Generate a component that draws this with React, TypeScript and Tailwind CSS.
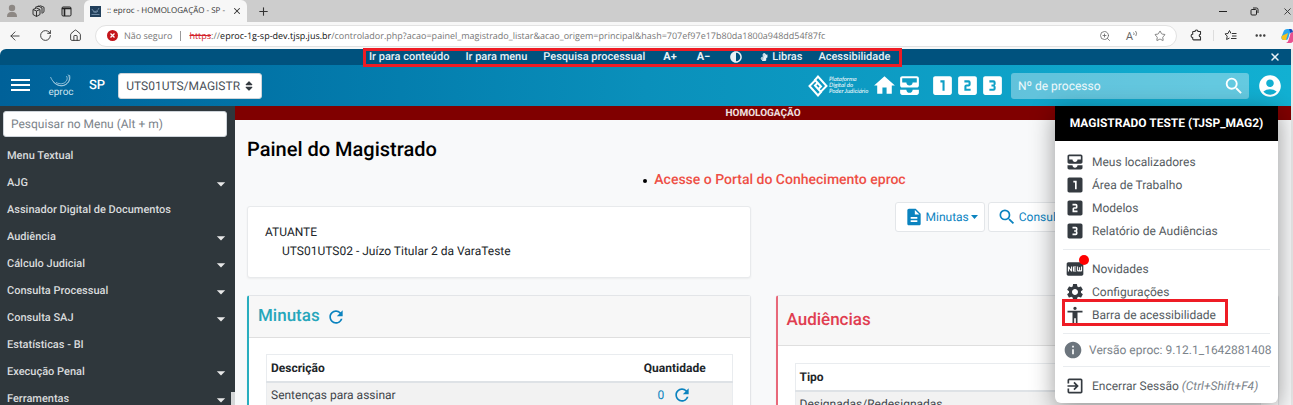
import React from "react";
import {
  MdAccessibility,
  MdAccountCircle,
  MdAllInbox,
  MdArrowDropDown,
  MdDescription,
  MdExitToApp,
  MdFiberNew,
  MdHome,
  MdInfo,
  MdLooks3,
  MdLooksOne,
  MdLooksTwo,
  MdRefresh,
  MdSearch,
  MdSettings,
} from "react-icons/md";
import { FaAdjust, FaSignLanguage, FaSort } from "react-icons/fa";
import { ArrowLeft, Ellipsis, House, Plus, RotateCw, Star, X, ZoomIn } from "lucide-react";

const menuItems: { label: string; expandable: boolean }[] = [
  { label: "Menu Textual", expandable: false },
  { label: "AJG", expandable: true },
  { label: "Assinador Digital de Documentos", expandable: false },
  { label: "Audiência", expandable: true },
  { label: "Cálculo Judicial", expandable: true },
  { label: "Consulta Processual", expandable: true },
  { label: "Consulta SAJ", expandable: true },
  { label: "Estatísticas - BI", expandable: false },
  { label: "Execução Penal", expandable: true },
  { label: "Ferramentas", expandable: true },
];

function TabStrip() {
  return (
    <div className="flex h-[22px] shrink-0 items-center bg-[#cdcdcd] text-[#333]">
      <button type="button" aria-label="Perfil" className="ml-1.5 shrink-0">
        <svg width="12" height="14" viewBox="0 0 12 14" className="fill-[#8d8884]">
          <circle cx="6" cy="4" r="3.2" />
          <path d="M1 13c0-3 1-5 5-5s5 2 5 5z" />
        </svg>
      </button>
      <button type="button" aria-label="Espaços de trabalho" className="ml-3.5 shrink-0">
        <svg width="13" height="13" viewBox="0 0 13 13" fill="none" stroke="#333" strokeWidth="1">
          <path d="M1 4.5 4.5 3 8 4.5v5L4.5 11.5 1 9.5z" />
          <path d="M1 4.5 4.5 6 8 4.5M4.5 6v5.5" />
          <path d="M3 2.5 6.5 1 10 3v5.5M5.5 1.8 8.5.8 12 2.3v4.5L10.5 8" />
        </svg>
      </button>
      <button type="button" aria-label="Ações de guia" className="ml-4 shrink-0">
        <svg width="11" height="11" viewBox="0 0 11 11" fill="none" stroke="#222">
          <rect x="1" y="1" width="9" height="9" rx="1.2" />
          <path d="M1 2.5h9M3.5 3v7" strokeWidth="1.6" />
        </svg>
      </button>
      <div className="ml-3 flex h-full w-[163px] items-center self-start rounded-t-md bg-[#f7f7f7] pl-1.5">
        <svg width="11" height="11" viewBox="0 0 11 11" className="shrink-0">
          <rect width="11" height="11" fill="#22405c" />
          <path d="M2 3c1 3 5 4 7-1M3 5.5c2 1.5 4 1 5-.5M1.5 8.5h8" stroke="#7f9bb5" strokeWidth=".8" fill="none" />
        </svg>
        <span className="ml-1.5 w-[125px] shrink-0 text-[8px] whitespace-nowrap">:: eproc - HOMOLOGAÇÃO - SP -</span>
        <button type="button" aria-label="Fechar guia">
          <X size={10} strokeWidth={2.5} />
        </button>
      </div>
      <button type="button" aria-label="Nova guia" className="ml-2.5">
        <Plus size={13} strokeWidth={2} />
      </button>
      <div className="ml-auto flex items-center gap-[23px]">
        <button type="button" aria-label="Minimizar">
          <svg width="8" height="8" viewBox="0 0 8 8" stroke="#222"><path d="M0 4.5h8" /></svg>
        </button>
        <button type="button" aria-label="Restaurar">
          <svg width="9" height="9" viewBox="0 0 9 9" fill="none" stroke="#222">
            <rect x="1" y="2.5" width="5.5" height="5.5" rx="1" />
            <path d="M3 1h3.5q1.5 0 1.5 1.5V6" />
          </svg>
        </button>
        <button type="button" aria-label="Fechar">
          <X size={11} strokeWidth={2} />
        </button>
      </div>
    </div>
  );
}

function AddressBar() {
  return (
    <div className="flex h-[27px] shrink-0 items-center overflow-hidden bg-[#f7f7f7] text-[#333]">
      <div className="flex w-[95px] shrink-0 items-center gap-[17px] pl-2">
        <button type="button" aria-label="Voltar"><ArrowLeft size={14} strokeWidth={1.5} /></button>
        <button type="button" aria-label="Atualizar"><RotateCw size={13} strokeWidth={1.7} /></button>
        <button type="button" aria-label="Início"><House size={13} strokeWidth={1.7} /></button>
      </div>
      <div className="flex h-[22px] min-w-0 flex-1 items-center rounded-full border border-[#e2e2e2] bg-white pr-2.5 pl-[11px] text-[9px]">
        <svg width="11" height="11" viewBox="0 0 11 11" className="shrink-0">
          <circle cx="5.5" cy="5.5" r="5.5" fill="#c4161c" />
          <path d="M3.5 3.5l4 4M7.5 3.5l-4 4" stroke="#fff" strokeWidth="1.3" />
        </svg>
        <span className="ml-1.5 shrink-0 text-[9px] text-[#777]">Não seguro</span>
        <span className="mx-2 h-2.5 w-px shrink-0 bg-[#999]" />
        <span className="min-w-0 flex-1 overflow-hidden whitespace-nowrap text-[#777]">
          <span className="text-[#d3222a] line-through">https</span>://<span className="text-[#111]">eproc-1g-sp-dev.tjsp.jus.br</span>
          /controlador.php?acao=painel_magistrado_listar&amp;acao_origem=principal&amp;hash=707ef97e17b80da1800a948dd54f87fc
        </span>
        <div className="flex shrink-0 items-center gap-[15px] text-[#666]">
          <button type="button" aria-label="Zoom"><ZoomIn size={12} strokeWidth={1.6} /></button>
          <button type="button" aria-label="Ler em voz alta" className="flex h-3 items-center">
            <span className="text-[11px] leading-3">A</span>
            <svg width="6" height="12" viewBox="0 0 6 12" fill="none" stroke="#666" strokeWidth=".8"><path d="M.5 2.5q1.2 1 .2 2.5M2.5 1q2 2 .3 5" /></svg>
          </button>
          <button type="button" aria-label="Adicionar aos favoritos"><Star size={12} strokeWidth={1.6} /></button>
        </div>
      </div>
      <div className="flex shrink-0 items-center pl-[13px]">
        <button type="button" aria-label="Extensões">
          <svg width="13" height="13" viewBox="0 0 13 13" fill="none" stroke="#333" strokeWidth="1.1" strokeLinejoin="round">
            <path d="M3 2.5h2a1.5 1.5 0 0 1 3 0h2.5v2.8a1.3 1.3 0 0 0 0 2.6v3H3.5l-.8-.8V8.5a1.6 1.6 0 0 1 0-3.2V3z" />
          </svg>
        </button>
        <span className="mx-2.5 h-[11px] w-px bg-[#ddd]" />
        <button type="button" aria-label="Favoritos">
          <svg width="13" height="13" viewBox="0 0 13 13" fill="none" stroke="#333">
            <path d="M7 4.5 5.5 1.5 4 4.5l-3 .4 2.2 2.2-.6 3.4L5.5 9M8 4.5h4.5M8 7h4.5M7 9.5h5.5" />
          </svg>
        </button>
        <button type="button" aria-label="Mais opções" className="ml-[17px]"><Ellipsis size={13} strokeWidth={2.5} /></button>
        <button type="button" aria-label="Copilot" className="ml-3.5 w-3 overflow-hidden">
          <svg width="15" height="14" viewBox="0 0 15 14">
            <path d="M3 1.5Q4 0 6 0h4L7.5 8.5Q7 11 5 11H3Q0 11 .4 8z" fill="#2aa7ee" />
            <path d="M.6 7Q0 11 3 11h2l2-7z" fill="#f8c21c" />
            <path d="M12 12.5Q11 14 9 14H5q2-.5 2.6-3L9.5 4.5Q10 3 12 3q3 0 2.6 3z" fill="#e9508f" />
            <path d="M8 0h2q1.5 0 2 3-2 0-2.5 1.5z" fill="#1747b8" />
          </svg>
        </button>
      </div>
    </div>
  );
}

function AccessibilityBar() {
  return (
    <div className="flex h-4 shrink-0 items-center rounded-tl-md bg-[#00527e] text-[11px] leading-4 font-medium text-[#e8f1f6]">
      <nav aria-label="Acessibilidade" className="relative ml-[369px] flex items-center gap-4 whitespace-nowrap">
        <a href="#conteudo">Ir para conteúdo</a>
        <a href="#menu">Ir para menu</a>
        <a href="#pesquisa">Pesquisa processual</a>
        <button type="button" className="ml-0.5 font-bold">A+</button>
        <button type="button" className="ml-1 font-bold">A−</button>
        <button type="button" aria-label="Alto contraste" className="ml-1"><FaAdjust size={12} /></button>
        <a href="#libras" className="ml-0.5 flex items-center gap-1"><FaSignLanguage size={8} />Libras</a>
        <a href="#acessibilidade">Acessibilidade</a>
        <span className="pointer-events-none absolute -top-px -right-3 -bottom-0.5 -left-1.5 z-10 border-[3px] border-[#ee1c25]" />
      </nav>
      <button type="button" aria-label="Fechar barra" className="mr-2.5 ml-auto">
        <X size={12} strokeWidth={3} />
      </button>
    </div>
  );
}

function Header() {
  return (
    <header className="flex h-[41px] shrink-0 items-center bg-linear-to-r from-[#006199] via-[#0a90bb] to-[#12b0d2] text-white">
      <button type="button" aria-label="Menu" className="ml-[11px] shrink-0">
        <svg width="19" height="15" viewBox="0 0 19 15" stroke="#fff" strokeWidth="2"><path d="M0 2h19M0 7h19M0 12h19" /></svg>
      </button>
      <a href="#inicio" className="ml-[19px] flex w-6 shrink-0 flex-col items-center text-[10px] leading-[9px]">
        <svg width="24" height="14" viewBox="0 0 24 14" fill="none" stroke="#a9cfe3" strokeWidth=".8">
          <path d="M1.5 3C4 9 9 12.5 14 11.5 19 10.5 22 6 20.5 1" />
          <path d="M4 7.5c4 4.5 10 6 14 2 3-3 3-6 1-9" />
          <path d="M7 8.5c4 2 8 1.5 10-1 1.5-2 1.5-3.5.5-5.5" />
        </svg>
        <span className="text-[#cfe4ef]">eproc</span>
      </a>
      <span className="ml-4 text-[13px] font-medium">SP</span>
      <div className="relative ml-[13px] shrink-0">
        <select aria-label="Perfil" className="h-[26px] w-36 appearance-none rounded-[3px] border border-[#ced4da] bg-white pr-5 pl-[7px] text-[12px] text-[#495057] [text-rendering:geometricPrecision]">
          <option>UTS01UTS/MAGISTR</option>
        </select>
        <FaSort size={12} className="pointer-events-none absolute top-[7px] right-[7px] text-[#343a40]" />
      </div>
      <div className="ml-auto flex shrink-0 items-center">
        <a href="#pdpj" className="flex items-center gap-px">
          <svg width="20" height="22" viewBox="0 0 20 22" fill="none" stroke="#fff" strokeWidth="2">
            <path d="M7.5 5 1.5 11l8.5 9.5 3-3.5-6-6.5 3-3" />
            <path d="M12.5 17l6-6L10 1.5 7 5l6 6.5-3 3" />
          </svg>
          <span className="w-[41px] font-['Lato'] text-[6px] leading-[6px] whitespace-nowrap italic">
            Plataforma<br />Digital do<br />Poder Judiciário
          </span>
        </a>
        <a href="#home" aria-label="Início" className="ml-0.5"><MdHome size={25} /></a>
        <a href="#localizadores" aria-label="Meus localizadores"><MdAllInbox size={25} /></a>
        <a href="#area" aria-label="Área de Trabalho" className="ml-2"><MdLooksOne size={25} /></a>
        <a href="#modelos" aria-label="Modelos"><MdLooksTwo size={25} /></a>
        <a href="#relatorio" aria-label="Relatório de Audiências"><MdLooks3 size={25} /></a>
        <div className="ml-1.5 flex h-[26px] w-[238px] items-center rounded-[3px] bg-white/35 pr-1 pl-[7px]">
          <input type="text" aria-label="Nº de processo" placeholder="Nº de processo" className="min-w-0 flex-1 bg-transparent text-[12px] text-white outline-none [text-rendering:geometricPrecision] placeholder:text-white/90" />
          <button type="button" aria-label="Pesquisar"><MdSearch size={22} /></button>
        </div>
        <button type="button" aria-label="Conta" className="mr-2 ml-2"><MdAccountCircle size={26} /></button>
      </div>
    </header>
  );
}

function Sidebar() {
  return (
    <aside id="menu" className="relative w-[235px] shrink-0 overflow-hidden bg-[#2f373c]">
      <div className="px-[3px] pt-[5px] pb-1">
        <input type="text" aria-label="Pesquisar no Menu" placeholder="Pesquisar no Menu (Alt + m)" className="h-[26px] w-[224px] rounded-[3px] border border-[#ced4da] bg-white px-[7px] text-[12px] outline-none [text-rendering:geometricPrecision] placeholder:text-[#7b838a]" />
      </div>
      <ul className="pt-0.5">
        {menuItems.map((item) => (
          <li key={item.label}>
            <a href="#menu" className="flex h-[27px] items-center justify-between pr-1 pl-[7px] text-[11px] font-medium text-[#d9dbdc]">
              {item.label}
              {item.expandable && <MdArrowDropDown size={20} className="text-[#e8e8e8]" />}
            </a>
          </li>
        ))}
      </ul>
      <span className="absolute right-0 bottom-0 h-[13px] w-1 bg-[#d5d7d8]" />
    </aside>
  );
}

function ToolButton({ icon, label, caret }: { icon: React.ReactNode; label: string; caret?: boolean }) {
  return (
    <button type="button" className="flex h-[30px] shrink-0 items-center gap-0.5 rounded-[3px] border border-[#e3e6e9] bg-white pr-1.5 pl-2 text-[12px] whitespace-nowrap text-[#0b83bf] [text-rendering:geometricPrecision]">
      {icon}
      <span>{label}</span>
      {caret && <svg width="7" height="4" viewBox="0 0 7 4"><path d="M0 0h7L3.5 4z" fill="#0b83bf" /></svg>}
    </button>
  );
}

function DataTable({ columns, children }: { columns: string[]; children: React.ReactNode }) {
  return (
    <table className="w-full border border-[#e9ecef] text-[12px] text-[#3e444a]">
      <thead>
        <tr className="h-[27px] border-b-2 border-[#dee2e6] bg-white text-[#212529]">
          {columns.map((c, i) => (
            <th key={c} scope="col" className={i === 0 ? "px-1 text-left font-bold" : "w-[114px] text-center font-bold"}>{c}</th>
          ))}
        </tr>
      </thead>
      <tbody>{children}</tbody>
    </table>
  );
}

function Main() {
  return (
    <main id="conteudo" className="min-w-0 flex-1 overflow-hidden bg-[#f8f9fa]">
      <div className="h-3.5 bg-[#800000] text-center text-[10px] leading-[15px] font-bold text-[#f0e0e0]">HOMOLOGAÇÃO</div>
      <div className="px-3">
        <h1 className="pt-4 text-[20px] leading-[26px] font-medium text-black">Painel do Magistrado</h1>
        <ul className="flex justify-center pt-2 pl-[34px] text-[14px] leading-5">
          <li className="relative font-medium text-[#ee4f45]">
            <span className="absolute top-[9px] -left-[11px] size-1 rounded-full bg-black" />
            <a href="#portal">Acesse o Portal do Conhecimento eproc</a>
          </li>
        </ul>
        <div className="grid grid-cols-2 gap-x-[25px] gap-y-[17px] pt-3">
          <section className="mt-1 h-[72px] rounded-[3px] border border-[#e8eaec] bg-white px-[17px] pt-4 text-[12px] leading-[19px] text-[#212529] shadow-xs">
            <p>ATUANTE</p>
            <p className="pl-[17px]">UTS01UTS02 - Juízo Titular 2 da VaraTeste</p>
          </section>
          <div className="flex items-start gap-[3px] overflow-hidden pl-[119px]">
            <ToolButton icon={<MdDescription size={20} />} label="Minutas" caret />
            <ToolButton icon={<MdSearch size={20} />} label="Consultas" caret />
          </div>
          <section className="rounded-[3px] border border-l-2 border-[#e3e5e8] border-l-[#28aebf] bg-white shadow-xs">
            <h2 className="flex h-[42px] items-center gap-1.5 border-b border-[#dfdfdf] bg-[#f7f7f7] px-[9px] text-[17px] font-medium text-[#26a6bb]">
              Minutas
              <button type="button" aria-label="Atualizar minutas" className="text-[#0b83bf]"><MdRefresh size={20} /></button>
            </h2>
            <div className="px-[17px] pt-4 pb-4">
              <DataTable columns={["Descrição", "Quantidade"]}>
                <tr className="h-[27px] bg-[#f2f2f2]">
                  <td className="px-1">Sentenças para assinar</td>
                  <td>
                    <span className="flex items-center justify-center gap-2 text-[#0b83bf]">
                      <a href="#sentencas">0</a>
                      <button type="button" aria-label="Atualizar"><MdRefresh size={20} /></button>
                    </span>
                  </td>
                </tr>
              </DataTable>
            </div>
          </section>
          <section className="rounded-[3px] border border-l-2 border-[#e3e5e8] border-l-[#e8697a] bg-white shadow-xs">
            <h2 className="flex h-[50px] items-center border-b border-[#dfdfdf] bg-[#f7f7f7] px-[9px] text-[17px] font-medium text-[#e03d50]">Audiências</h2>
            <div className="px-[17px] pt-[17px] pb-4">
              <DataTable columns={["Tipo"]}>
                <tr className="h-[27px] bg-[#f2f2f2]">
                  <td className="px-1">Designadas/Redesignadas</td>
                </tr>
              </DataTable>
            </div>
          </section>
        </div>
      </div>
    </main>
  );
}

function MenuRow({ icon, children }: { icon: React.ReactNode; children: React.ReactNode }) {
  return (
    <a href="#conta" className="flex h-[23px] items-center gap-[7px] px-2.5 text-[12px] whitespace-nowrap text-[#555b61]">
      <span className="text-[#343a40]">{icon}</span>
      {children}
    </a>
  );
}

function AccountMenu() {
  return (
    <div className="absolute top-0 right-[13px] z-20 w-[223px] rounded-b-md bg-white pb-1.5 shadow-[0_6px_24px_rgba(0,0,0,0.4)]">
      <h2 className="h-[35px] bg-black text-center text-[12px] leading-[35px] font-bold text-white">MAGISTRADO TESTE (TJSP_MAG2)</h2>
      <div className="pt-[9px]">
        <MenuRow icon={<MdAllInbox size={20} />}>Meus localizadores</MenuRow>
        <MenuRow icon={<MdLooksOne size={20} />}>Área de Trabalho</MenuRow>
        <MenuRow icon={<MdLooksTwo size={20} />}>Modelos</MenuRow>
        <MenuRow icon={<MdLooks3 size={20} />}>Relatório de Audiências</MenuRow>
      </div>
      <hr className="mx-2 my-[7px] border-[#e9ecef]" />
      <MenuRow
        icon={
          <span className="relative block">
            <MdFiberNew size={20} />
            <span className="absolute -top-1 -right-1 size-2.5 rounded-full bg-[#fe0000]" />
          </span>
        }
      >
        Novidades
      </MenuRow>
      <MenuRow icon={<MdSettings size={20} />}>Configurações</MenuRow>
      <div className="relative">
        <MenuRow icon={<MdAccessibility size={20} />}>Barra de acessibilidade</MenuRow>
        <span className="pointer-events-none absolute -top-1 bottom-0 left-[7px] w-[166px] border-[3px] border-[#ee1c25]" />
      </div>
      <hr className="mx-2 mt-[7px] mb-1 border-[#e9ecef]" />
      <p className="flex h-6 items-center gap-1.5 px-2 text-[12px] whitespace-nowrap text-[#7b838a]">
        <MdInfo size={20} className="shrink-0 text-[#6c757d]" />
        Versão eproc: 9.12.1_1642881408
      </p>
      <hr className="mx-2 mt-1 mb-[7px] border-[#e9ecef]" />
      <MenuRow icon={<MdExitToApp size={20} />}>
        <span>Encerrar Sessão <em className="text-[#7b838a]">(Ctrl+Shift+F4)</em></span>
      </MenuRow>
    </div>
  );
}

export default function App() {
  return (
    <div className="flex h-screen flex-col overflow-hidden bg-[#f7f7f7] font-['Roboto',sans-serif] [text-rendering:geometricPrecision]">
      <div className="shrink-0 font-['Open_Sans',sans-serif]">
        <TabStrip />
        <AddressBar />
      </div>
      <div className="flex min-h-0 flex-1 flex-col border-r-2 border-[#e9e9e9]">
        <AccessibilityBar />
        <Header />
        <div className="relative flex min-h-0 flex-1">
          <Sidebar />
          <Main />
          <AccountMenu />
        </div>
      </div>
    </div>
  );
}
